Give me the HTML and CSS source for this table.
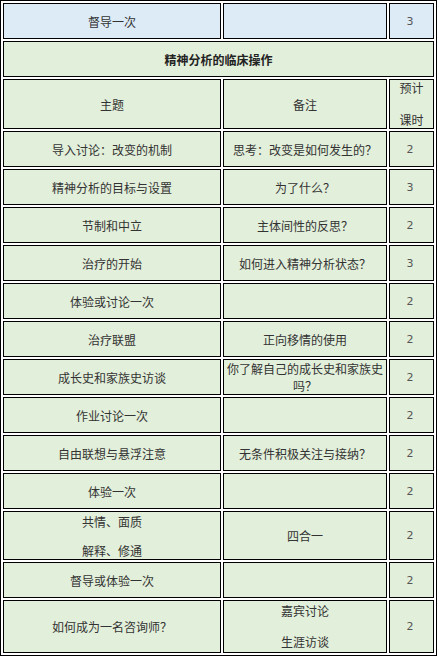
FILE: index.html
```html
<!DOCTYPE html>
<html lang="zh-CN">
<head>
<meta charset="utf-8">
<title>精神分析的临床操作</title>
<link rel="stylesheet" href="styles.css">
</head>
<body>
<table class="plan">
  <colgroup>
    <col class="c-topic">
    <col class="c-note">
    <col class="c-hours">
  </colgroup>
  <tbody>
    <tr class="blue">
      <td>督导一次</td>
      <td></td>
      <td class="num">3</td>
    </tr>
    <tr>
      <td colspan="3" class="title">精神分析的临床操作</td>
    </tr>
    <tr>
      <td>主题</td>
      <td>备注</td>
      <td><div class="stack head"><span class="ln">预计</span><span class="ln">课时</span></div></td>
    </tr>
    <tr><td>导入讨论：改变的机制</td><td>思考：改变是如何发生的？</td><td class="num">2</td></tr>
    <tr><td>精神分析的目标与设置</td><td>为了什么？</td><td class="num">3</td></tr>
    <tr><td>节制和中立</td><td>主体间性的反思？</td><td class="num">2</td></tr>
    <tr><td>治疗的开始</td><td>如何进入精神分析状态？</td><td class="num">3</td></tr>
    <tr><td>体验或讨论一次</td><td></td><td class="num">2</td></tr>
    <tr><td>治疗联盟</td><td>正向移情的使用</td><td class="num">2</td></tr>
    <tr><td>成长史和家族史访谈</td><td>你了解自己的成长史和家族史吗？</td><td class="num">2</td></tr>
    <tr><td>作业讨论一次</td><td></td><td class="num">2</td></tr>
    <tr><td>自由联想与悬浮注意</td><td>无条件积极关注与接纳？</td><td class="num">2</td></tr>
    <tr><td>体验一次</td><td></td><td class="num">2</td></tr>
    <tr>
      <td><div class="stack four"><span class="ln">共情、面质</span><span class="ln">解释、修通</span></div></td>
      <td>四合一</td>
      <td class="num">2</td>
    </tr>
    <tr><td>督导或体验一次</td><td></td><td class="num">2</td></tr>
    <tr>
      <td>如何成为一名咨询师？</td>
      <td><div class="stack last"><span class="ln">嘉宾讨论</span><span class="ln">生涯访谈</span></div></td>
      <td class="num">2</td>
    </tr>
  </tbody>
</table>
</body>
</html>
```

FILE: styles.css
```css
html, body {
  margin: 0;
  padding: 0;
  background: #ffffff;
}

.plan {
  border-collapse: separate;
  border-spacing: 2px;
  border: 1px solid #000000;
  width: 437px;
  table-layout: fixed;
  background: #ffffff;
  font-family: "Noto Sans CJK SC", "Noto Sans", sans-serif;
  font-size: 12px;
  line-height: 17px;
  color: #333333;
}

.c-topic { width: 218px; }
.c-note { width: 164px; }
.c-hours { width: 45px; }

.plan td {
  border: 1px solid #000000;
  padding: 0 1px;
  height: 34px;
  text-align: center;
  vertical-align: middle;
  background: #e2efda;
}

.plan tr.blue td {
  background: #ddebf7;
}

.plan td.title {
  font-weight: bold;
  color: #222222;
}

.plan td.num {
  font-family: "DejaVu Sans", "Noto Sans", sans-serif;
  font-size: 11px;
  color: #555555;
  padding-right: 4px;
}

.stack {
  display: flex;
  flex-direction: column;
  align-items: center;
}

.stack .ln {
  display: block;
  line-height: 16px;
}

.stack.head {
  gap: 16px;
}

.stack.four {
  padding: 2px 0 0;
  gap: 13px;
}

.stack.last {
  padding: 2px 0;
  gap: 15px;
}
```
